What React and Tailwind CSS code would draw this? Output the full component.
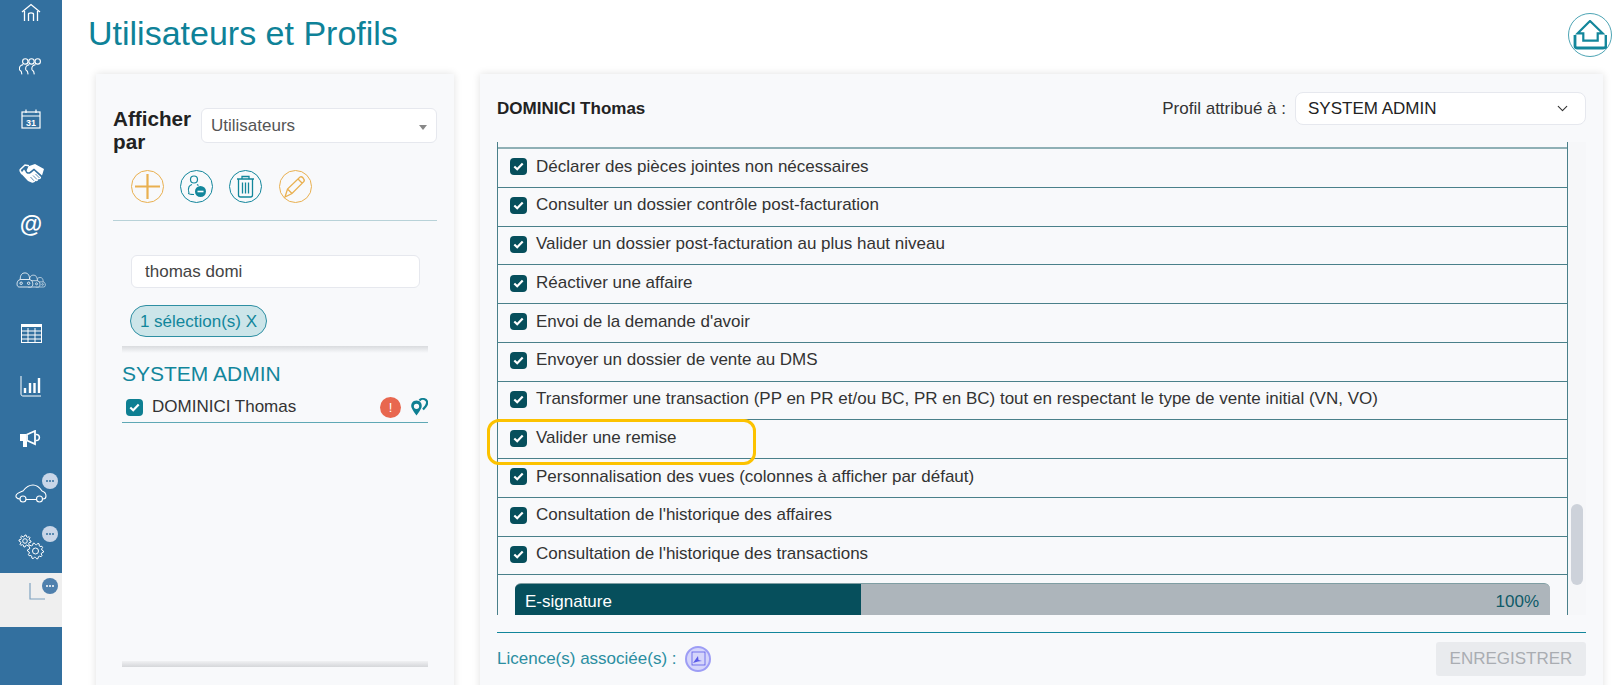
import React from "react";
import { ChevronDown } from "lucide-react";

const rights = [
  "Déclarer des pièces jointes non nécessaires",
  "Consulter un dossier contrôle post-facturation",
  "Valider un dossier post-facturation au plus haut niveau",
  "Réactiver une affaire",
  "Envoi de la demande d'avoir",
  "Envoyer un dossier de vente au DMS",
  "Transformer une transaction (PP en PR et/ou BC, PR en BC) tout en respectant le type de vente initial (VN, VO)",
  "Valider une remise",
  "Personnalisation des vues (colonnes à afficher par défaut)",
  "Consultation de l'historique des affaires",
  "Consultation de l'historique des transactions",
];

const Checkbox = ({ color }) => (
  <span className={`flex h-[17px] w-[17px] shrink-0 items-center justify-center rounded-[4px] ${color}`}>
    <svg width="11" height="9" viewBox="0 0 11 9" fill="none" stroke="white" strokeWidth="2.2">
      <path d="M1.3 4.5 L4.2 7.2 L9.7 1.5" />
    </svg>
  </span>
);

const Badge = ({ active }) => (
  <span className={`absolute right-[4px] flex h-4 w-4 items-center justify-center gap-[1px] rounded-full ${active ? "top-[5px] bg-[#4f80ad]" : "top-0 bg-[#c9d6e8]"}`}>
    <i className={`h-[2px] w-[2px] rounded-full ${active ? "bg-white" : "bg-[#33709f]"}`} />
    <i className={`h-[2px] w-[2px] rounded-full ${active ? "bg-white" : "bg-[#33709f]"}`} />
    <i className={`h-[2px] w-[2px] rounded-full ${active ? "bg-white" : "bg-[#33709f]"}`} />
  </span>
);

// one person of the group icon, outlines are left open so they cross like the original
const Person = ({ x }) => (
  <g>
    <circle cx={x} cy="3.4" r="2.7" />
    <path d={`M${x - 2.2} 6.6 C${x - 5} 7 ${x - 6.2} 9 ${x - 5.8} 11.5 C${x - 5.6} 12.6 ${x - 4.4} 12.8 ${x - 4} 13.6 L${x - 3.4} 16.4 M${x + 2.2} 6.6 C${x + 5} 7 ${x + 6.2} 9 ${x + 5.8} 11.5 C${x + 5.6} 12.6 ${x + 4.4} 12.8 ${x + 4} 13.6 L${x + 3.4} 16.4`} />
  </g>
);

const FrontCar = ({ x, s }) => (
  <g transform={`translate(${x} ${16.5 - 16 * s}) scale(${s})`}>
    <path fill="#33709f" d="M3 16 C0 16 0 11 2 9 L4 8 C4 3 6 1 9 1 C12 1 14 3 14 8 L16 9 C18 11 18 16 15 16 Z" />
    <path d="M4 8 H14" />
    <circle cx="5" cy="12" r="1.3" />
    <circle cx="13" cy="12" r="1.3" />
  </g>
);

// gear outline built from teeth around a circle
const gearPath = (cx, cy, r, teeth) => {
  const pts = [];
  for (let i = 0; i < teeth * 4; i++) {
    const a = (i * Math.PI * 2) / (teeth * 4);
    const rad = i % 4 === 0 || i % 4 === 1 ? r : r - 1.6;
    pts.push(`${(cx + rad * Math.cos(a)).toFixed(2)} ${(cy + rad * Math.sin(a)).toFixed(2)}`);
  }
  return `M${pts.join(" L")} Z`;
};

const sideIcons = [
  <svg width="20" height="20" viewBox="0 0 20 20" fill="none" stroke="white" strokeWidth="1.3" className="mt-[1px]">
    <path d="M1 9 L10 1.5 L19 9 M3.5 8 V18 M16.5 8 V18 M7.5 18 V11 C7.5 9.5 12.5 9.5 12.5 11 V18" />
  </svg>,
  <svg width="25" height="17" viewBox="0 0 25 17" fill="none" stroke="white" strokeWidth="1.1">
    <Person x="6.3" />
    <Person x="12.5" />
    <Person x="18.7" />
  </svg>,
  <svg width="20" height="20" viewBox="0 0 20 20" fill="none" stroke="white" strokeWidth="1.2">
    <rect x="1" y="3" width="18" height="16" />
    <path d="M1 7 H19 M5 0.5 V4 M15 0.5 V4" />
    <text x="10" y="17" textAnchor="middle" fill="white" stroke="none" fontSize="9" fontWeight="700" fontFamily="Liberation Sans, sans-serif">31</text>
  </svg>,
  <svg width="25" height="20" viewBox="0 0 25 20">
    <path fill="none" stroke="white" strokeWidth="1.6" d="M0.8 7 L6 2 L10 2.8 M0.8 7 L3 11" />
    <path fill="white" d="M9.5 3.2 L16 1 L25 6 L23 12.5 L15 5.5 L10.5 9 C8.5 10 7 8 8 6.5 Z" />
    <path fill="white" d="M2 10.5 L5 6.5 L6.5 8.5 C7 11 10 11.5 12 10 L15 7.5 L22 14 C22.5 15.5 21 16.5 19.5 16 C19.5 17.5 18 18.5 16.5 18 C15.5 19.5 14 20 12.5 19.5 L9 18 Z" />
    <path fill="none" stroke="#33709f" strokeWidth="0.8" d="M11.5 14 L15 17.8 M14 12.5 L18 16.5 M16.5 11 L20.5 15" />
  </svg>,
  <span className="-mt-[3px] text-[23px] font-bold leading-none text-white">@</span>,
  <svg width="30" height="17" viewBox="0 0 32 17" fill="none" stroke="white" strokeWidth="0.9">
    <FrontCar x="19.5" s="0.68" />
    <FrontCar x="11" s="0.84" />
    <FrontCar x="0.5" s="1" />
  </svg>,
  <svg width="21" height="19" viewBox="0 0 21 19" fill="none" stroke="white" strokeWidth="1">
    <rect x="0.5" y="0.5" width="20" height="18" />
    <path strokeWidth="2" d="M0.5 2 H20.5" />
    <path d="M0.5 7 H20.5 M0.5 11 H20.5 M0.5 15 H20.5 M7 4 V18.5 M14 4 V18.5" />
  </svg>,
  <svg width="22" height="21" viewBox="0 0 22 21" fill="none" stroke="white">
    <path strokeWidth="1" d="M1 0 V18 C1 19.5 2 20 3 20 H21" />
    <path strokeWidth="2.4" d="M5 17 V12 M10 17 V7 M14.5 17 V7 M19 17 V2" />
  </svg>,
  <svg width="22" height="18" viewBox="0 0 22 18" className="-mt-[2px]">
    <path fill="white" d="M0 4 H6 V11 H0 Z M3 11 H7 L7 17 H3 Z" />
    <path fill="none" stroke="white" strokeWidth="1.8" d="M7 4.5 L15 1 V14 L7 10.5 Z" />
    <path fill="none" stroke="white" strokeWidth="1.6" d="M16 4.5 C20.5 4 20.5 11 16 10.5" />
  </svg>,
  <svg width="32" height="19" viewBox="0 0 32 19" fill="none" stroke="white" strokeWidth="1.1">
    <path d="M5 15 C2 15 0 13 1.5 10.5 C3 8.5 6 8 8 7 C11 3 14 1 18 1 C22 1 25 4 27 7 C30 8 31 10 31 12 C31 14 30 15 28 15 M11 15.5 H21" />
    <circle cx="8" cy="15" r="3" />
    <circle cx="24.5" cy="15" r="3" />
  </svg>,
  <svg width="26" height="26" viewBox="0 0 26 26" fill="none" stroke="white" strokeWidth="1">
    <path d={gearPath(7, 7, 6, 8)} />
    <circle cx="7" cy="7" r="2.3" />
    <path d={gearPath(17.5, 17, 8, 10)} />
    <circle cx="17.5" cy="17" r="3" />
  </svg>,
  <svg width="16" height="17" viewBox="0 0 16 17" fill="none" stroke="#7fa2c0" strokeWidth="1.2" className="-mt-[16px] ml-[12px]">
    <path d="M1 0 V16 H16" />
  </svg>,
];

const Sidebar = () => (
  <aside className="h-[685px] w-[62px] shrink-0 overflow-hidden bg-[#33709f]">
    <div className="-mt-[14px] flex flex-col">
      {sideIcons.map((icon, i) => (
        <div key={i} className={`relative flex h-[53.4px] items-center justify-center ${i === 11 ? "bg-[#efefef]" : ""}`}>
          {icon}
          {i === 9 && <span className="absolute left-0 right-0 top-[6px]"><Badge /></span>}
          {i === 10 && <span className="absolute left-0 right-0 top-[6px]"><Badge /></span>}
          {i === 11 && <Badge active />}
        </div>
      ))}
    </div>
  </aside>
);

const RoundButton = ({ color, children }) => (
  <button className="flex h-[33px] w-[33px] items-center justify-center rounded-full border" style={{ borderColor: color }}>
    {children}
  </button>
);

const LeftCard = () => (
  <section className="h-[640px] w-[358px] shrink-0 bg-[#f8f9fb] pt-[34px] shadow-[0_0_8px_rgba(0,0,0,0.12)]">
    <div className="flex pl-[17px] pr-[17px]">
      <div className="-mt-[1px] w-[88px] text-[20.7px] font-bold leading-[23px] text-[#222]">Afficher par</div>
      <div className="flex h-[35px] flex-1 items-center justify-between rounded-md border border-[#e6e8ee] bg-white pl-[9px] pr-[9px] pt-[1px] text-[17px] text-[#555]">
        Utilisateurs
        <span className="mt-[2px] h-0 w-0 border-x-[4px] border-t-[5px] border-x-transparent border-t-[#888]" />
      </div>
    </div>
    <div className="ml-[34.5px] mt-[17px] flex gap-[16.4px]">
      <RoundButton color="#e9b050">
        <svg width="25" height="25" viewBox="0 0 25 25" stroke="#e9b050" strokeWidth="2.2"><path d="M12.5 0 V25 M0 12.5 H25" /></svg>
      </RoundButton>
      <RoundButton color="#12869b">
        <svg width="24" height="25" viewBox="0 0 24 25" fill="none" stroke="#12869b" strokeWidth="1.2">
          <circle cx="10" cy="5.5" r="3.5" />
          <path d="M5 19 C3 13 6 11 8 10.5 M13 10.5 L14.5 11.5" />
          <path d="M4.5 19 C4.5 20 6 20.5 10 20.5" />
          <circle cx="16.5" cy="17.5" r="5.5" fill="#12869b" stroke="none" />
          <path d="M13.5 17.5 H19.5" stroke="white" strokeWidth="1.6" />
        </svg>
      </RoundButton>
      <RoundButton color="#12869b">
        <svg width="19" height="23" viewBox="0 0 19 23" fill="none" stroke="#12869b" strokeWidth="1.3">
          <path d="M1 4 H18 M6 4 V1.5 H13 V4 M2.5 4 V20 C2.5 21.5 3.5 22 4.5 22 H14.5 C15.5 22 16.5 21.5 16.5 20 V4 M6.5 7.5 V18.5 M9.5 7.5 V18.5 M12.5 7.5 V18.5" />
        </svg>
      </RoundButton>
      <RoundButton color="#e9b050">
        <svg width="24" height="24" viewBox="0 0 24 24" fill="none" stroke="#e9b050" strokeWidth="1.3">
          <path d="M2 22 L4.5 14 L17 2 C19 1 22 4 21 6.5 L9 18.5 Z M15 4 L19.5 8.5 M4.5 14 L9 18.5" />
        </svg>
      </RoundButton>
    </div>
    <div className="mx-[17px] mt-[17px] border-t border-[#b8d2d8]" />
    <input readOnly value="thomas domi" className="ml-[35px] mt-[34px] block h-[33px] w-[289px] rounded-md border border-[#e6e8ee] bg-white px-[13px] text-[17px] text-[#444] outline-none" />
    <div className="ml-[34px] mt-[17px] flex h-[32px] w-[137px] items-center justify-center rounded-full border border-[#2e8fa3] bg-[#cce5e9] pt-[1px] text-[17px] text-[#12869b]">
      1 sélection(s) X
    </div>
    <div className="mx-[26px] mt-[9px] h-[7px] bg-gradient-to-b from-[#d9dbde] to-[#f8f9fb]" />
    <div className="mx-[26px] h-[299px]">
      <div className="mt-[9px] text-[21px] leading-[24px] text-[#12869b]">SYSTEM ADMIN</div>
      <div className="mt-[9px] flex h-[28px] items-center border-b border-[#5fa8b5] pb-[3px] pl-[4px] text-[17px] text-[#333]">
        <Checkbox color="bg-[#0e7f92]" />
        <span className="ml-[9px] flex-1">DOMINICI Thomas</span>
        <span className="flex h-[21px] w-[21px] items-center justify-center rounded-full bg-[#e8674f] text-[13px] leading-none text-white">!</span>
        <svg className="ml-[9px]" width="18" height="18" viewBox="0 0 18 18" fill="#0e7f92">
          <path fillRule="evenodd" d="M6.5 2.5 C10.5 2.5 12.5 6 11.5 9.5 C10.5 12 8 15.5 6.5 17.5 C5 15.5 2.5 12 1.5 9.5 C0.5 6 2.5 2.5 6.5 2.5 Z M6.5 5.7 A2.6 2.6 0 1 0 6.5 11 A2.6 2.6 0 1 0 6.5 5.7 Z" />
          <path fill="none" stroke="#0e7f92" strokeWidth="2.2" d="M9.5 2.5 C11 0.7 14 0.5 16 2 C18 4 17 6.5 15.5 8.5 L13 11.5" />
        </svg>
      </div>
    </div>
    <div className="mx-[26px] h-[6px] bg-gradient-to-t from-[#d5d7da] to-[#f0f1f3]" />
  </section>
);

const RightCard = () => (
  <section className="h-[640px] w-[1123px] shrink-0 bg-[#f8f9fb] px-[17px] shadow-[0_0_8px_rgba(0,0,0,0.12)]">
    <div className="flex h-[68px] items-center justify-between pt-[1px]">
      <div className="text-[17px] font-bold text-[#222]">DOMINICI Thomas</div>
      <div className="flex items-center">
        <span className="text-[17px] text-[#333]">Profil attribué à :</span>
        <div className="ml-[9px] flex h-[33px] w-[291px] items-center justify-between rounded-lg border border-[#e6e8ee] bg-white pl-[12px] pr-[14px] text-[17px] text-[#222]">
          SYSTEM ADMIN
          <ChevronDown size={17} strokeWidth={1.6} className="text-[#333]" />
        </div>
      </div>
    </div>
    <div className="relative flex">
      <div className="h-[473px] flex-1 overflow-hidden border-x border-[#4a808a]">
        <div className="mt-[5px] border-t-2 border-[#8fb0b5]">
          {rights.map((label) => (
            <div key={label} className="flex h-[38.75px] items-center gap-[9px] border-b border-[#4a808a] pb-[2px] pl-[12px] text-[17px] text-[#333]">
              <Checkbox color="bg-[#064f5c]" />
              <span className="-mt-[1px]">{label}</span>
            </div>
          ))}
        </div>
        <div className="mx-[17px] mt-[8px] flex h-[40px] overflow-hidden rounded-t-md border-t border-[#7f9ea3] bg-[#adb5bb] text-[17px]">
          <div className="w-[346px] bg-[#064f5c] pl-[10px] pt-[5px] text-white">E-signature</div>
          <div className="flex-1 pr-[11px] pt-[5px] text-right text-[#0f5a68]">100%</div>
        </div>
      </div>
      <div className="h-[473px] w-[18px] shrink-0 bg-[#f6f7f9] pl-[3px] pr-[3px] pt-[362px]">
        <div className="h-[81px] rounded-md bg-[#cdd2da]" />
      </div>
      <div className="absolute left-[-10px] top-[277px] h-[46px] w-[269px] rounded-xl border-[3px] border-[#fcc200]" />
    </div>
    <div className="mt-[17px] flex h-[44px] items-center justify-between border-t border-[#12869b] pt-[9px]">
      <div className="flex items-center text-[17px] text-[#2b8ea1]">
        Licence(s) associée(s) :
        <span className="ml-[8px] flex h-[26px] w-[26px] items-center justify-center rounded-full border-2 border-[#9d9df5] bg-[#d5d5fb]">
          <svg width="16" height="16" viewBox="0 0 16 16" fill="none" stroke="#5a5ae8" strokeWidth="0.8">
            <rect x="2" y="1" width="13" height="13" />
            <path fill="#5a5ae8" stroke="none" d="M3 12 L8 5 L8.5 9 L12 10 L8 10.5 Z" />
          </svg>
        </span>
      </div>
      <button className="h-[34px] w-[150px] rounded-[3px] bg-[#e9ebee] text-[17px] text-[#a9adb2]">ENREGISTRER</button>
    </div>
  </section>
);

export default function App() {
  return (
    <div className="flex h-[685px] w-[1619px] overflow-hidden bg-white font-['Liberation_Sans',Arial,sans-serif]">
      <Sidebar />
      <main className="flex min-w-0 flex-1 flex-col">
        <header className="flex h-[74px] shrink-0 items-start justify-between pl-[26px] pr-[7px]">
          <h1 className="mt-[14px] text-[34px] leading-[38px] text-[#0e8298]">Utilisateurs et Profils</h1>
          <button className="mt-[13px] flex h-[44px] w-[44px] items-center justify-center rounded-full border border-[#4ea5b5]">
            <svg width="34" height="30" viewBox="0 0 34 30" fill="none" stroke="#12869b" strokeWidth="2.2">
              <path d="M4.7 13.3 L17 1 L29.7 13.3 H24.7 V20.7 H10.3 V13.3 Z" />
              <path d="M2 15 V26 C2 27.5 3 28 4.5 28 H30 C31.5 28 33 27.5 33 26 V15" strokeWidth="2.8" />
            </svg>
          </button>
        </header>
        <div className="flex gap-[26px] pl-[34px]">
          <LeftCard />
          <RightCard />
        </div>
      </main>
    </div>
  );
}
